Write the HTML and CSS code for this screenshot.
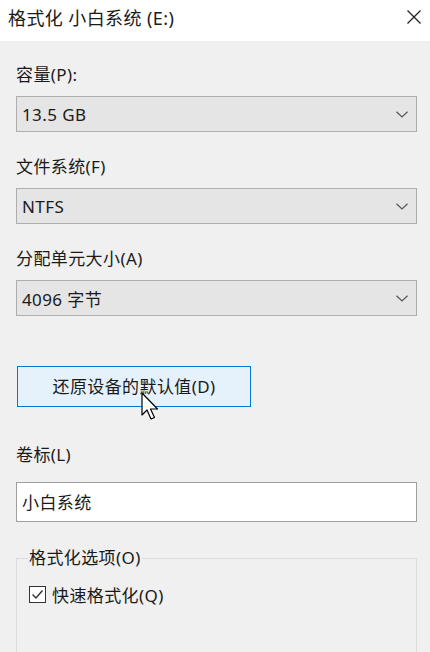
FILE: index.html
```html
<!DOCTYPE html>
<html lang="zh-CN">
<head>
<meta charset="utf-8">
<title>格式化 小白系统 (E:)</title>
<link rel="stylesheet" href="styles.css">
</head>
<body>
<div class="dialog">
  <header class="titlebar">
    <span class="title">格式化 小白系统 (E:)</span>
    <svg class="close" width="16" height="16" viewBox="0 0 16 16"><path d="M1.5 1.5 L14.5 14.5 M14.5 1.5 L1.5 14.5" stroke="#222" stroke-width="1.3" fill="none"/></svg>
  </header>
  <main class="content">
    <label class="label l1">容量(P):</label>
    <div class="select"><span>13.5 GB</span><svg class="chev" width="12" height="7" viewBox="0 0 12 7"><path d="M0.5 0.8 L6 6 L11.5 0.8" stroke="#555" stroke-width="1.2" fill="none"/></svg></div>
    <label class="label l2">文件系统(F)</label>
    <div class="select"><span>NTFS</span><svg class="chev" width="12" height="7" viewBox="0 0 12 7"><path d="M0.5 0.8 L6 6 L11.5 0.8" stroke="#555" stroke-width="1.2" fill="none"/></svg></div>
    <label class="label l2">分配单元大小(A)</label>
    <div class="select"><span>4096 字节</span><svg class="chev" width="12" height="7" viewBox="0 0 12 7"><path d="M0.5 0.8 L6 6 L11.5 0.8" stroke="#555" stroke-width="1.2" fill="none"/></svg></div>
    <div class="btnwrap">
      <button class="btn">还原设备的默认值(D)</button>
      <svg class="cursor" width="20" height="30" viewBox="0 0 20 30"><path d="M1 1 L1 23 L6 18 L10 27 L13.5 25.5 L9.5 17 L16.5 17 Z" fill="#fff" stroke="#000" stroke-width="1.2" stroke-linejoin="round"/></svg>
    </div>
    <label class="label l4">卷标(L)</label>
    <div class="input">小白系统</div>
    <fieldset class="group">
      <legend>格式化选项(O)</legend>
      <div class="check">
        <span class="box"><svg width="15" height="15" viewBox="0 0 15 15"><path d="M2.5 7.5 L6 11 L12.5 3.5" stroke="#333" stroke-width="1.4" fill="none"/></svg></span>
        <span>快速格式化(Q)</span>
      </div>
    </fieldset>
  </main>
</div>
</body>
</html>
```

FILE: styles.css
```css
html, body {
  margin: 0;
  padding: 0;
  background: #f0f0f0;
  height: 652px;
  overflow: hidden;
}
body {
  font-family: "Noto Sans", "Noto Sans CJK SC", sans-serif;
  font-size: 17px;
  letter-spacing: 0.4px;
  color: #1a1a1a;
}
.titlebar {
  height: 41px;
  background: #fff;
  display: flex;
  align-items: center;
  justify-content: space-between;
  padding: 0 9px 0 8px;
  box-sizing: border-box;
}
.title {
  font-size: 18px;
  line-height: 20px;
  margin-top: -6px;
}
.close {
  margin-top: -7px;
  margin-right: -1px;
}
.content {
  display: flex;
  flex-direction: column;
  padding: 0 13px 0 16px;
}
.label {
  line-height: 20px;
  height: 20px;
  margin-bottom: 11px;
}
.l1 { margin-top: 24px; }
.l2 { margin-top: 25px; }
.l4 { margin-top: 38px; margin-bottom: 17px; }
.select {
  height: 36px;
  box-sizing: border-box;
  border: 1px solid #adadad;
  background: #e5e5e5;
  display: flex;
  align-items: center;
  justify-content: space-between;
  padding: 0 8px 0 5px;
}
.chev { margin-top: 1px; }
.btnwrap {
  position: relative;
  margin-top: 50px;
  display: flex;
}
.btn {
  width: 234px;
  height: 41px;
  margin-left: 1px;
  box-sizing: border-box;
  border: 1px solid #0078d7;
  background: #e5f1fb;
  font: inherit;
  letter-spacing: inherit;
  color: #1a1a1a;
  padding: 0;
  padding-bottom: 2px;
}
.cursor {
  position: absolute;
  left: 125px;
  top: 26px;
}
.input {
  height: 40px;
  box-sizing: border-box;
  border: 1px solid #a0a0a0;
  background: #fff;
  display: flex;
  align-items: center;
  padding: 0 5px;
  padding-bottom: 2px;
}
.group {
  margin: 26px 0 0 0;
  border: 1px solid #dcdcdc;
  padding: 14px 12px 60px 12px;
  min-width: 0;
}
.group legend {
  padding: 0 1px;
  margin-left: -1px;
  line-height: 20px;
}
.check {
  display: flex;
  align-items: center;
  gap: 6px;
}
.box {
  width: 17px;
  height: 17px;
  box-sizing: border-box;
  border: 1px solid #333;
  background: #fff;
  display: flex;
  align-items: center;
  justify-content: center;
}
```
